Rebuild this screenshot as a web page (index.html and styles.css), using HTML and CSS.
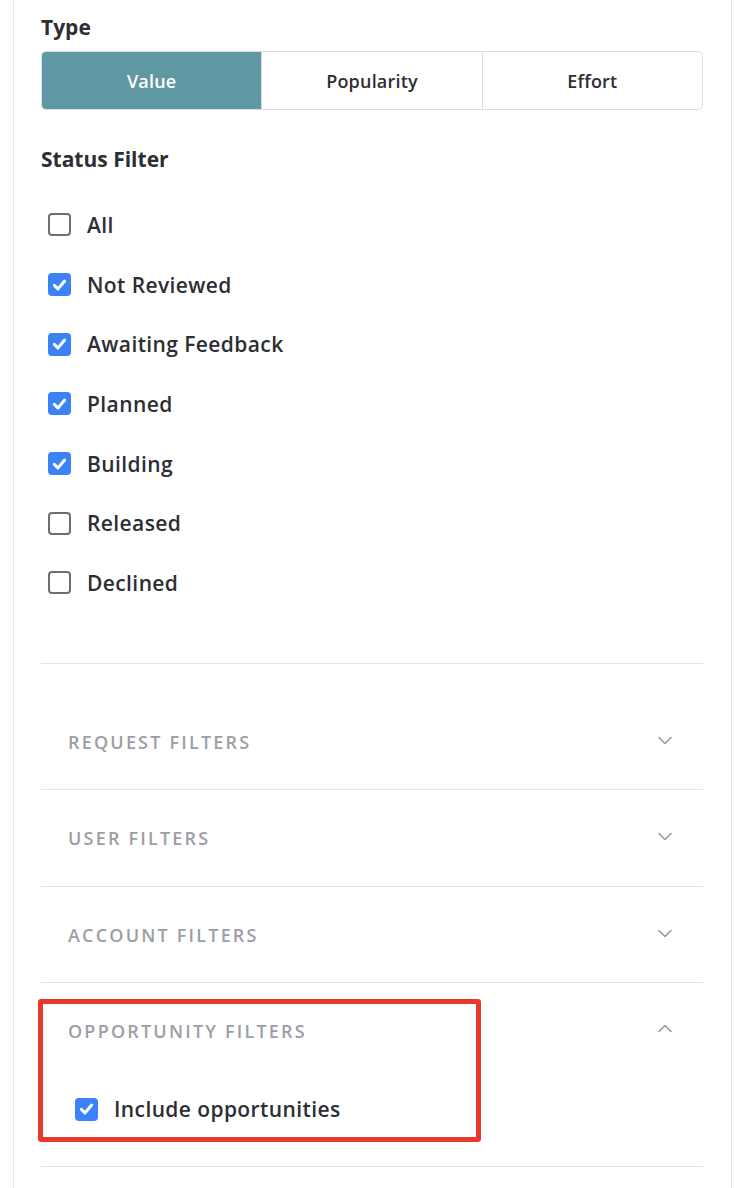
FILE: index.html
```html
<!DOCTYPE html>
<html>
<head>
<meta charset="utf-8">
<link rel="stylesheet" href="styles.css">
</head>
<body>
<div class="panel">
  <div class="label type-label">Type</div>
  <div class="segmented">
    <div class="seg active">Value</div>
    <div class="seg">Popularity</div>
    <div class="seg">Effort</div>
  </div>

  <div class="label status-label">Status Filter</div>
  <div class="checklist">
    <div class="row"><span class="box"></span><span class="txt">All</span></div>
    <div class="row"><span class="box checked"><svg viewBox="0 0 24 24"><path d="M5.5 12.5l4.5 4.5 8.5-10" /></svg></span><span class="txt">Not Reviewed</span></div>
    <div class="row"><span class="box checked"><svg viewBox="0 0 24 24"><path d="M5.5 12.5l4.5 4.5 8.5-10" /></svg></span><span class="txt">Awaiting Feedback</span></div>
    <div class="row"><span class="box checked"><svg viewBox="0 0 24 24"><path d="M5.5 12.5l4.5 4.5 8.5-10" /></svg></span><span class="txt">Planned</span></div>
    <div class="row"><span class="box checked"><svg viewBox="0 0 24 24"><path d="M5.5 12.5l4.5 4.5 8.5-10" /></svg></span><span class="txt">Building</span></div>
    <div class="row"><span class="box"></span><span class="txt">Released</span></div>
    <div class="row"><span class="box"></span><span class="txt">Declined</span></div>
  </div>

  <div class="sections">
    <div class="section">
      <div class="sec-head"><span class="sec-title">REQUEST FILTERS</span><svg class="chev" viewBox="0 0 14 9"><path d="M1 1.5L7 7.5l6-6"/></svg></div>
    </div>
    <div class="section">
      <div class="sec-head"><span class="sec-title">USER FILTERS</span><svg class="chev" viewBox="0 0 14 9"><path d="M1 1.5L7 7.5l6-6"/></svg></div>
    </div>
    <div class="section">
      <div class="sec-head"><span class="sec-title">ACCOUNT FILTERS</span><svg class="chev" viewBox="0 0 14 9"><path d="M1 1.5L7 7.5l6-6"/></svg></div>
    </div>
    <div class="section open">
      <div class="sec-head"><span class="sec-title">OPPORTUNITY FILTERS</span><svg class="chev up" viewBox="0 0 14 9"><path d="M1 7.5L7 1.5l6 6"/></svg></div>
      <div class="row opp-row"><span class="box checked"><svg viewBox="0 0 24 24"><path d="M5.5 12.5l4.5 4.5 8.5-10" /></svg></span><span class="txt">Include opportunities</span></div>
      <div class="highlight"></div>
    </div>
  </div>
</div>
</body>
</html>
```

FILE: styles.css
```css
html, body {
  margin: 0;
  padding: 0;
  background: #ffffff;
}

body {
  font-family: "Open Sans", "Noto Sans", sans-serif;
  color: #2c2e33;
  width: 742px;
  height: 1188px;
  overflow: hidden;
}

.panel {
  margin-left: 13px;
  width: 719px;
  height: 1188px;
  border-left: 1px solid #e4e5ea;
  border-right: 1px solid #e4e5ea;
  padding: 0 28px 0 27px;
  box-sizing: border-box;
}

.label {
  font-size: 21px;
  font-weight: 700;
  letter-spacing: 0;
  line-height: 24px;
}

.type-label {
  padding-top: 15px;
  height: 51px;
  box-sizing: border-box;
}

.segmented {
  display: flex;
  height: 59px;
  border: 1px solid #dcdde2;
  border-radius: 5px;
  overflow: hidden;
  box-sizing: border-box;
}

.seg {
  flex: 1;
  display: flex;
  align-items: center;
  justify-content: center;
  font-size: 18px;
  font-weight: 600;
  color: #2c2e33;
  letter-spacing: 0.2px;
}

.seg + .seg {
  border-left: 1px solid #dcdde2;
}

.seg.active {
  background: #5f97a2;
  color: #ffffff;
}

.status-label {
  margin-top: 37px;
}

.checklist {
  margin-top: 24px;
  display: flex;
  flex-direction: column;
}

.row {
  display: flex;
  align-items: center;
  height: 59.7px;
}

.box {
  width: 23px;
  height: 23px;
  box-sizing: border-box;
  border: 2px solid #6d6e72;
  border-radius: 4px;
  margin-left: 7px;
  margin-right: 16px;
  display: flex;
  align-items: center;
  justify-content: center;
  flex: none;
}

.box.checked {
  background: #3b82f6;
  border-color: #3b82f6;
}

.box svg {
  width: 22px;
  height: 22px;
  fill: none;
  stroke: #ffffff;
  stroke-width: 3.8;
  stroke-linecap: round;
  stroke-linejoin: round;
}

.txt {
  font-size: 21px;
  font-weight: 600;
  color: #2c2e33;
  letter-spacing: 0.4px;
}

.sections {
  margin-top: 50px;
  border-top: 1px solid #e2e3e8;
  padding-top: 30px;
}

.section {
  border-bottom: 1px solid #e2e3e8;
  height: 96.5px;
  box-sizing: border-box;
  position: relative;
}

.section.open {
  height: 184px;
}

.sec-head {
  height: 96px;
  display: flex;
  align-items: center;
  justify-content: space-between;
  padding: 0 31px 0 27px;
  box-sizing: border-box;
}

.sec-title {
  font-size: 18px;
  font-weight: 600;
  letter-spacing: 2.2px;
  color: #9c9ea5;
}

.chev {
  width: 14px;
  height: 9px;
  fill: none;
  stroke: #9a9ca3;
  stroke-width: 1.6;
  stroke-linecap: round;
  stroke-linejoin: round;
  margin-top: -3px;
}

.chev.up {
  margin-top: -5px;
}

.opp-row {
  margin-top: 18px;
  padding-left: 27px;
  height: 24px;
}

.highlight {
  position: absolute;
  left: -3px;
  top: 16px;
  width: 443px;
  height: 143px;
  border: 5px solid #e8392b;
  border-radius: 3px;
  box-sizing: border-box;
  pointer-events: none;
}
```
